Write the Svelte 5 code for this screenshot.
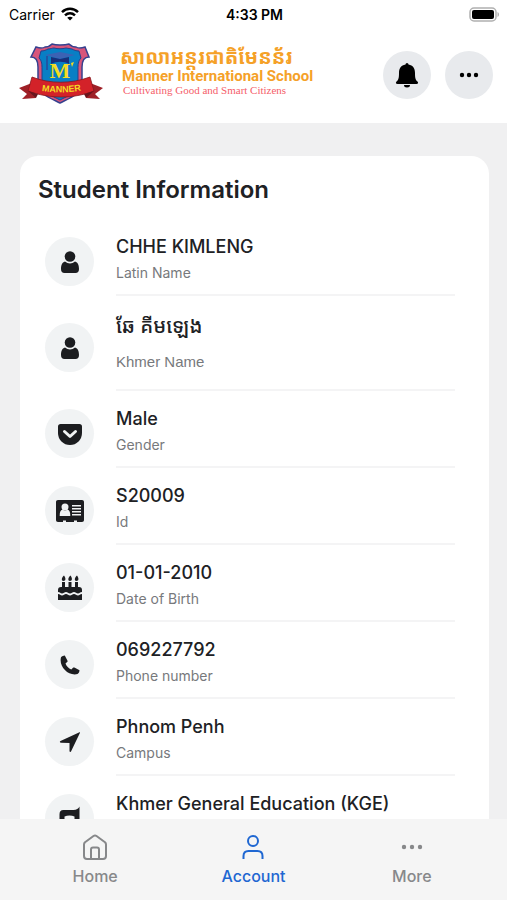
<script>
	const rows = [
		{ icon: 'user', value: 'CHHE KIMLENG', label: 'Latin Name' },
		{ icon: 'user', value: 'ឆែ គីមឡេង', label: 'Khmer Name', khmer: true },
		{ icon: 'pocket', value: 'Male', label: 'Gender' },
		{ icon: 'card', value: 'S20009', label: 'Id' },
		{ icon: 'cake', value: '01-01-2010', label: 'Date of Birth' },
		{ icon: 'phone', value: '069227792', label: 'Phone number' },
		{ icon: 'arrow', value: 'Phnom Penh', label: 'Campus' },
		{ icon: 'dog', value: 'Khmer General Education (KGE)' }
	];

	const tabs = [
		{ id: 'home', label: 'Home' },
		{ id: 'account', label: 'Account' },
		{ id: 'more', label: 'More' }
	];

	let active = 'account';
</script>

<div class="screen">
	<div class="status">
		<div class="carrier">
			<span>Carrier</span>
			<svg width="18" height="14" viewBox="0 0 18 14" fill="none" stroke="#000" stroke-width="2.5">
				<path d="M1 5.2C5.6.7 12.4.7 17 5.2" />
				<path d="M4 8.4c3-2.8 7-2.8 10 0" />
				<path d="M9 13.6 6.2 10.8c1.6-1.4 4-1.4 5.6 0z" fill="#000" stroke="none" />
			</svg>
		</div>
		<div class="time">4:33 PM</div>
		<svg class="battery" width="31" height="15" viewBox="0 0 31 15">
			<rect x="1" y="1" width="26" height="13" rx="4" fill="#fff" stroke="#b0b0b0" stroke-width="1.5" />
			<rect x="3" y="3" width="22" height="9" rx="2" />
			<path d="M28.5 5v5c2-.8 2-4.2 0-5z" fill="#b0b0b0" />
		</svg>
	</div>

	<header>
		<svg class="crest" width="86" height="62" viewBox="0 0 86 62">
			<path
				d="M18 4c3 1 6 2 9 0 3 0 5-1 7-3 3 1 5 1 8 1s6 0 9-1c2 2 4 3 7 3 3 2 6 1 9 0l4 10c-5 0-7 4-7 10v16c0 11-12 15-22 20-10-5-22-9-22-20V24c0-6-2-10-7-10z"
				fill="#d7557b" stroke="#36418f" stroke-width="1.5" />
			<path
				d="M23 8c3 0 5-1 7-2 3 0 4-1 6-1 4 1 8 1 12 0 2 0 4 1 6 1 2 1 4 2 7 2l2 7c-3 3-3 7-3 11v15c0 8-10 12-18 16-8-4-18-8-18-16V26c0-4 0-8-3-11z"
				fill="#087fc5" stroke="#25408c" />
			<path d="m27 12 15-3 15 3-15 4z" fill="#3b62b4" />
			<path d="M33 14v7c6-3 13-3 18 0v-7l-9 2z" fill="#182f7c" />
			<path d="M29 13v14" stroke="#27489a" stroke-width="1.5" />
			<text class="initial" x="42" y="35" text-anchor="middle">M</text>
			<path d="m53 20 3-1-2 5z" fill="#f4dc22" />
			<path d="m1 45 13-5 4 15-14 1 5-5zM85 45l-13-5-4 15 14 1-5-5z" fill="#9f2027" />
			<path d="M14 34c18 7 39 7 58 0l4 14c-21 8-44 8-66 0z" fill="#d32229" stroke="#85171d" stroke-width=".8" />
			<path d="m10 48 8 7 2-4zM76 48l-8 7-2-4z" fill="#69151d" />
			<path id="ribbon" d="M21 47.500Q43 51.500 66 47" fill="none" />
			<text class="ribbon-text" text-anchor="middle">
				<textPath href="#ribbon" startOffset="50%">MANNER</textPath>
			</text>
		</svg>
		<div class="school">
			<div class="school-khmer">សាលាអន្តរជាតិមែនន័រ</div>
			<div class="school-name">Manner International School</div>
			<div class="motto">Cultivating Good and Smart Citizens</div>
		</div>
		<div class="actions">
			<button aria-label="Notifications">
				<svg width="24" height="26" viewBox="0 0 24 26">
					<path d="M10.500 2.500a1.500 1.500 0 0 1 3 0c4.500.7 6.500 4 6.500 8.500 0 5 .5 7 2.500 8.500 1.200 1.200.5 2.500-1 2.500h-19c-1.500 0-2.200-1.300-1-2.500C3.500 18 4 16 4 11c0-4.500 2-7.800 6.500-8.500zM9 23h6a3 2.500 0 0 1-6 0z" />
				</svg>
			</button>
			<button aria-label="More options">
				<svg width="20" height="6" viewBox="0 0 20 6">
					<circle cx="3" cy="3" r="2.2" /><circle cx="10" cy="3" r="2.2" /><circle cx="17" cy="3" r="2.2" />
				</svg>
			</button>
		</div>
	</header>

	<main>
		<section class="card">
			<h1>Student Information</h1>
			<ul>
				{#each rows as row}
					<li class:khmer={row.khmer}>
						<div class="icon">
							{#if row.icon === 'user'}
								<svg width="20" height="24" viewBox="0 0 20 24">
									<circle cx="10" cy="6.500" r="5.300" />
									<path d="M5 11.500c3 2.500 7 2.500 10 0 3 .8 4 4 4 7.500 0 2.500-1.200 4-3.500 4h-11C2.200 23 1 21.500 1 19c0-3.500 1-6.700 4-7.500z" />
								</svg>
							{:else if row.icon === 'pocket'}
								<svg width="26" height="24" viewBox="0 0 26 24">
									<path d="M3.500 2h19C24 2 25 3 25 4.500V11a12 12 0 0 1-24 0V4.500C1 3 2 2 3.500 2z" />
									<path d="m7.500 9.500 5.500 5 5.500-5" fill="none" stroke="#f1f3f4" stroke-width="3" stroke-linecap="round" stroke-linejoin="round" />
								</svg>
							{:else if row.icon === 'card'}
								<svg width="30" height="24" viewBox="0 0 30 24">
									<path d="M3 1h24c1.200 0 2 .8 2 2v18c0 1.200-.8 2-2 2h-5v-1.500h-3V23h-8v-1.500H8V23H3c-1.200 0-2-.8-2-2V3c0-1.200.8-2 2-2z" />
									<g fill="#f1f3f4">
										<circle cx="10" cy="8" r="3.500" />
										<path d="M7.500 10.500c1.500 1.300 3.500 1.300 5 0 2 .5 2.800 2.500 2.800 6.500H4.700c0-4 .8-6 2.800-6.500zM17 6h9v1.500h-9zM17 9h9v1.500h-9zM17 12h9v1.500h-9zM17 15h9v1.500h-9z" />
									</g>
								</svg>
							{:else if row.icon === 'cake'}
								<svg width="26" height="26" viewBox="0 0 26 26">
									<path d="M5 7h3v5h3.500V7h3v5H18V7h3v5h1c2 0 3 1.300 3 3v2c-2 0-2.500 1.500-4 1.500S18.500 17 17 17s-2.500 1.500-4 1.500S10.500 17 9 17s-2.500 1.500-4 1.500S3 17 1 17v-2c0-1.700 1-3 3-3h1zM1 19c2 0 2.500 1.500 4 1.500S7.500 19 9 19s2.500 1.500 4 1.500 2.500-1.500 4-1.500 2.500 1.500 4 1.500 2-1.500 4-1.500v6H1zM7 .5C4.500 2.500 4 6 6.500 6S9 3 7 .5zM13.500.5c-2.500 2-3 5.500-.5 5.500s2.500-3 .5-5.500zM20 .5c-2.500 2-3 5.500-.5 5.500s2.500-3 .5-5.500z" />
								</svg>
							{:else if row.icon === 'phone'}
								<svg width="20" height="20" viewBox="0 0 20 20">
									<path d="M1 2.300C2 1.200 3.500.5 4.800.5l2.700 5.200c.2.500.1 1-.4 1.300L5.500 8.500c1 2.700 3 4.800 5.800 6l1.700-1.700c.4-.4.9-.5 1.400-.2l5.100 2.700c0 1.500-.7 3-2 3.800C8.500 21.500-1.500 11.800 1 2.300z" />
								</svg>
							{:else if row.icon === 'arrow'}
								<svg width="22" height="22" viewBox="0 0 22 22">
									<path d="M20.500 1.200c.5-.2.700.1.500.6l-9 18.700c-.4.8-1.500.5-1.500-.4V12L2 11.800c-1.200 0-1.600-1.200-.5-1.800z" />
								</svg>
							{:else}
								<svg width="22" height="26" viewBox="0 0 22 26">
									<path d="M20.500.5v25h-5V10.500c-3-1.500-7-1.500-10 0v15h-5V8.500c0-3 1-4.500 4-4.500h10c3 0 5-1.500 6-3.500z" />
								</svg>
							{/if}
						</div>
						<div class="text">
							<div class="value">{row.value}</div>
							{#if row.label}
								<div class="label">{row.label}</div>
							{/if}
						</div>
					</li>
				{/each}
			</ul>
		</section>
	</main>

	<nav>
		{#each tabs as tab}
			<a href="#{tab.id}" class:active={active === tab.id} on:click={() => (active = tab.id)}>
				<svg width="26" height="26" viewBox="0 0 26 26" fill="none" stroke="currentColor" stroke-width="2" stroke-linejoin="round">
					{#if tab.id === 'home'}
						<path d="M2 10.500c0-1 .4-1.600 1-2.200L11.500 2c1-.7 2-.7 3 0L23 8.300c.6.600 1 1.200 1 2.200V22c0 1.700-1 3-3 3H5c-2 0-3-1.300-3-3zM9 25V15.500c0-1.300.7-2 2-2h4c1.300 0 2 .7 2 2V25" />
					{:else if tab.id === 'account'}
						<circle cx="13" cy="7" r="5" />
						<path d="M3.500 25v-3c0-3 2-5 5-5h9c3 0 5 2 5 5v3" />
					{:else}
						<g fill="currentColor" stroke="none">
							<circle cx="5" cy="13" r="2.2" /><circle cx="13" cy="13" r="2.2" /><circle cx="21" cy="13" r="2.2" />
						</g>
					{/if}
				</svg>
				<span>{tab.label}</span>
			</a>
		{/each}
	</nav>
</div>

<style>
	:global(body) {
		margin: 0;
	}

	.screen {
		display: flex;
		flex-direction: column;
		height: 100vh;
		background: #f0f0f1;
		color: #202124;
		font-family: Inter, "Noto Sans Khmer", "Khmer OS", sans-serif;
	}

	.status {
		display: grid;
		grid-template-columns: 1fr auto 1fr;
		align-items: center;
		height: 28px;
		padding: 0 7px 0 9px;
		background: #fff;
		color: #000;
		font-size: 14px;
	}

	.carrier {
		display: flex;
		align-items: center;
		gap: 6px;
	}

	.time {
		font-weight: 600;
	}

	.battery {
		justify-self: end;
	}

	header {
		display: flex;
		align-items: center;
		height: 95px;
		padding: 0 14px 0 18px;
		background: #fff;
		box-sizing: border-box;
	}

	.crest,
	.school {
		flex: none;
		margin-bottom: 4px;
	}

	.initial {
		font: bold 22px "Liberation Serif", serif;
		fill: #f4dc22;
	}

	.ribbon-text {
		font: bold 9px "Liberation Sans", sans-serif;
		fill: #f4dc22;
	}

	.school {
		margin-left: 16px;
		padding-bottom: 6px;
		white-space: nowrap;
	}

	.school-khmer {
		color: #f5a128;
		font-size: 20px;
		font-weight: 700;
		line-height: 24px;
	}

	.school-name {
		padding-left: 2px;
		color: #f5a128;
		font: bold 15px/14px Roboto, sans-serif;
	}

	.motto {
		padding-left: 3px;
		color: #f5606a;
		font: 11px/14px "Liberation Serif", serif;
	}

	.actions {
		display: flex;
		gap: 14px;
		margin-left: auto;
		padding-bottom: 2px;
	}

	button {
		display: flex;
		align-items: center;
		justify-content: center;
		width: 48px;
		height: 48px;
		padding: 0;
		border: 0;
		border-radius: 50%;
		background: #e8eaed;
	}

	main {
		flex: 1;
		min-height: 0;
		padding: 33px 18px 0 20px;
		overflow: hidden;
	}

	.card {
		padding: 17px 34px 16px 18px;
		border-radius: 18px;
		background: #fff;
	}

	h1 {
		margin: 0 0 12px;
		font-size: 24px;
		font-weight: 600;
		line-height: 34px;
	}

	ul {
		margin: 0;
		padding: 0;
		list-style: none;
	}

	li {
		display: flex;
		align-items: center;
		gap: 22px;
		height: 77px;
		padding-left: 7px;
	}

	.icon {
		display: flex;
		flex: none;
		align-items: center;
		justify-content: center;
		width: 49px;
		height: 49px;
		margin-top: 8px;
		border-radius: 50%;
		background: #f1f3f4;
		fill: #1c1d20;
	}

	.text {
		flex: 1;
		height: 100%;
		padding-top: 16px;
		border-bottom: 2px solid #f4f4f5;
		box-sizing: border-box;
	}

	.value {
		font-size: 18px;
		font-weight: 500;
		line-height: 24px;
	}

	.label {
		margin-top: 2px;
		color: #77797c;
		font-size: 14px;
		line-height: 24px;
	}

	li.khmer {
		height: 95px;
	}

	.khmer .value {
		font-size: 20px;
		line-height: 28px;
	}

	.khmer .label {
		margin-top: 10px;
		font-family: "Liberation Sans", sans-serif;
		font-size: 15px;
	}

	nav {
		display: grid;
		grid-template-columns: repeat(3, 1fr);
		flex: none;
		height: 81px;
		padding: 0 16px;
		background: #f5f5f5;
		box-sizing: border-box;
	}

	nav a {
		display: flex;
		flex-direction: column;
		align-items: center;
		gap: 4px;
		padding-top: 15px;
		color: #87888a;
		font-size: 16px;
		font-weight: 500;
		line-height: 24px;
		text-decoration: none;
	}

	nav a.active {
		color: #1f67d2;
	}
</style>
